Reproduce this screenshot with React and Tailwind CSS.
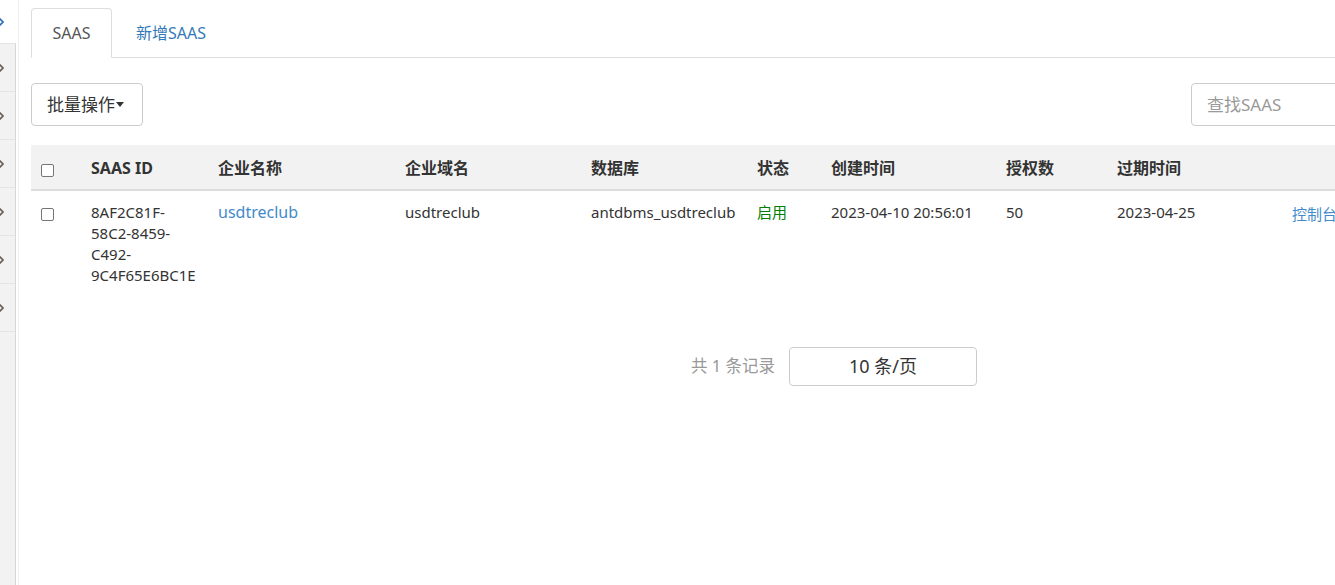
import { useState } from "react";

const font = { fontFamily: '"Noto Sans", "Noto Sans CJK SC", sans-serif' };

function Chevron({ active }) {
  return (
    <svg
      width="10"
      height="10"
      viewBox="0 0 10 10"
      className="-ml-[6px]"
      fill="none"
      stroke={active ? "#2f6fc0" : "#6a5f58"}
      strokeWidth="1.6"
    >
      <path d="M5 1 L9 5 L5 9" />
    </svg>
  );
}

function Box() {
  return (
    <span className="block w-[13px] h-[13px] border border-[#767676] rounded-[2px] bg-white" />
  );
}

const rows = [
  {
    id: "8AF2C81F-58C2-8459-C492-9C4F65E6BC1E",
    name: "usdtreclub",
    domain: "usdtreclub",
    db: "antdbms_usdtreclub",
    state: "启用",
    created: "2023-04-10 20:56:01",
    count: "50",
    expire: "2023-04-25",
  },
];

const heads = ["SAAS ID", "企业名称", "企业域名", "数据库", "状态", "创建时间", "授权数", "过期时间", ""];

export default function App() {
  const [tab, setTab] = useState(0);

  return (
    <div className="flex h-[585px] w-[1335px] overflow-hidden bg-white text-[#333]" style={font}>
      {/* Collapsed side menu */}
      <div className="w-[16px] shrink-0 flex flex-col">
        <div className="h-[43px] bg-white flex items-center overflow-hidden">
          <Chevron active />
        </div>
        {[0, 1, 2, 3, 4, 5].map((i) => (
          <div
            key={i}
            className="h-[48px] bg-[#f2f2f2] border-t border-[#e4e4e4] border-r border-r-[#d6d6d6] flex items-center overflow-hidden"
          >
            <Chevron />
          </div>
        ))}
        <div className="flex-1 bg-[#f2f2f2] border-t border-[#e4e4e4] border-r border-r-[#d6d6d6]" />
      </div>
      <div className="w-[3px] shrink-0 border-r border-[#efefef]" />

      {/* Main */}
      <div className="w-[1372px] shrink-0 pl-[12px] pt-[8px]">
        {/* Tabs */}
        <div className="flex border-b border-[#ddd] text-[16px]">
          <button
            onClick={() => setTab(0)}
            className={`h-[50px] -mb-px w-[81px] rounded-t-[4px] border ${
              tab === 0
                ? "border-[#ddd] border-b-white bg-white text-[#555]"
                : "border-transparent text-[#337ab7]"
            }`}
          >
            SAAS
          </button>
          <button
            onClick={() => setTab(1)}
            className={`h-[50px] -mb-px ml-[2px] px-[21px] rounded-t-[4px] border ${
              tab === 1
                ? "border-[#ddd] border-b-white bg-white text-[#555]"
                : "border-transparent text-[#337ab7]"
            }`}
          >
            新增SAAS
          </button>
        </div>

        {/* Toolbar */}
        <div className="mt-[25px] flex items-center justify-between w-[1360px]">
          <button className="h-[43px] w-[112px] border border-[#ccc] rounded-[4px] bg-white text-[17px] text-[#333] flex items-center pl-[15px]">
            批量操作
            <span className="ml-[1px] w-0 h-0 border-x-[4px] border-x-transparent border-t-[5px] border-t-[#333]" />
          </button>
          <input
            placeholder="查找SAAS"
            className="h-[43px] w-[200px] border border-[#ccc] rounded-[4px] pl-[15px] text-[17px] outline-none placeholder:text-[#999]"
          />
        </div>

        {/* Table */}
        <table className="mt-[19px] w-[1360px] table-fixed border-collapse">
          <colgroup>
            <col className="w-[52px]" />
            <col className="w-[127px]" />
            <col className="w-[187px]" />
            <col className="w-[186px]" />
            <col className="w-[166px]" />
            <col className="w-[74px]" />
            <col className="w-[175px]" />
            <col className="w-[111px]" />
            <col className="w-[175px]" />
            <col />
          </colgroup>
          <thead>
            <tr className="bg-[#f2f2f2] h-[45px] border-b-2 border-[#ddd] text-[16px] font-bold text-left">
              <th className="pl-[10px] pt-[6px]">
                <Box />
              </th>
              {heads.map((h, i) => (
                <th key={i} className="px-[8px] pt-[2px]">
                  {h}
                </th>
              ))}
            </tr>
          </thead>
          <tbody className="text-[15px] leading-[21px]">
            {rows.map((r) => (
              <tr key={r.id} className="align-top">
                <td className="pl-[10px] pt-[17px]">
                  <Box />
                </td>
                <td className="px-[8px] pt-[11px] pb-[11px]">{r.id}</td>
                <td className="px-[8px] pt-[11px] text-[16px] text-[#428bca]">{r.name}</td>
                <td className="px-[8px] pt-[11px]">{r.domain}</td>
                <td className="px-[8px] pt-[11px]">{r.db}</td>
                <td className="px-[8px] pt-[11px] text-[#008000]">{r.state}</td>
                <td className="px-[8px] pt-[11px]">{r.created}</td>
                <td className="px-[8px] pt-[11px]">{r.count}</td>
                <td className="px-[8px] pt-[11px]">{r.expire}</td>
                <td className="px-[8px] pt-[13px] text-[#428bca] whitespace-nowrap">控制台</td>
              </tr>
            ))}
          </tbody>
        </table>

        {/* Pagination */}
        <div className="mt-[50px] pl-[660px] flex items-center">
          <span className="text-[16.5px] text-[#999]">共 1 条记录</span>
          <div className="ml-[14px] h-[39px] w-[188px] border border-[#ccc] rounded-[4px] flex items-center justify-center text-[18px] text-[#333]">
            10 条/页
          </div>
        </div>
      </div>
    </div>
  );
}
